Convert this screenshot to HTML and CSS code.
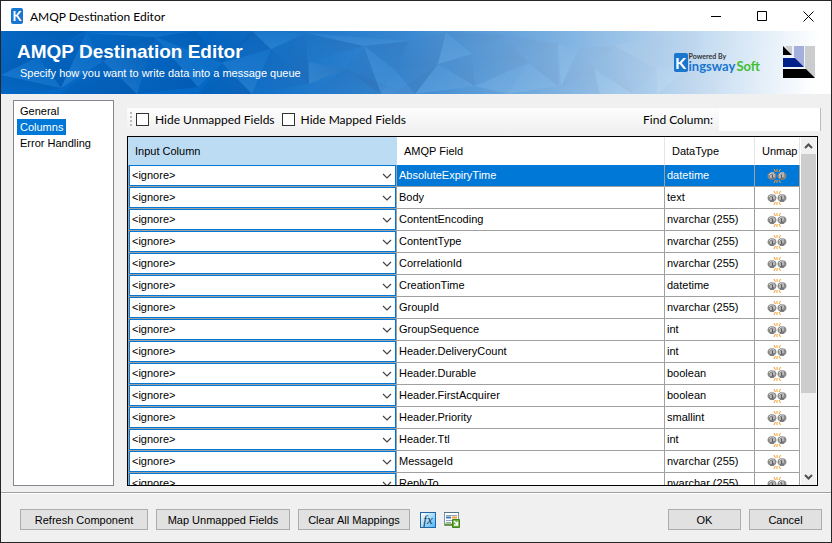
FILE: index.html
```
<!DOCTYPE html>
<html lang="en">
<head>
    <meta charset="utf-8">
    <title>AMQP Destination Editor</title>
    <link rel="stylesheet" href="styles.css">
</head>
<body>
    <svg class="symbols" aria-hidden="true">
        <symbol id="chevron" viewBox="0 0 10 6"><path d="M1 1l4 4 4-4" fill="none" stroke="#444" stroke-width="1.2"/></symbol>
        <symbol id="unlink" viewBox="0 0 20 16">
            <path d="M7 1l1.500 3M10 1v3M13.500 1l-1.500 3M7 15l1.500-3M10 15v-3M13.500 15l-1.500-3" stroke="#f0a030" fill="none"/>
            <ellipse cx="5" cy="8" rx="4.500" ry="4" fill="#8a8a8a"/>
            <ellipse cx="15" cy="8" rx="4.500" ry="4" fill="#8a8a8a"/>
            <path d="M2 7l2-2h3M12 7l2-2h3" stroke="#d5d5d5" fill="none"/>
            <path d="M4 7v3M7 6v3M13 7v3M16 6v3" stroke="#e0e0e0"/>
            <path d="M5.500 7v3M14.500 7v3" stroke="#5c5c5c"/>
            <path d="M3 11h4M13 11h4" stroke="#666"/>
        </symbol>
    </svg>

    <div class="window">
        <header class="titlebar">
            <span class="app-icon">K</span>
            <span class="title">AMQP Destination Editor</span>
            <button class="win-btn" aria-label="Minimize"><svg width="11" height="11"><path d="M0 5.500h10" stroke="#000"/></svg></button>
            <button class="win-btn" aria-label="Maximize"><svg width="11" height="11"><path d="M.5.5h9v9h-9z" fill="none" stroke="#000"/></svg></button>
            <button class="win-btn" aria-label="Close"><svg width="11" height="11"><path d="M.5.5l10 10M10.500.5l-10 10" stroke="#000"/></svg></button>
        </header>

        <section class="banner">
            <svg class="facets" viewBox="0 0 830 63" preserveAspectRatio="none" aria-hidden="true">
                <defs>
                    <linearGradient id="dark" x1="0" y1="0" x2="1" y2="1"><stop offset="0" stop-color="#00489a" stop-opacity="0"/><stop offset="1" stop-color="#00489a" stop-opacity=".4"/></linearGradient>
                    <linearGradient id="dark2" x1="1" y1="0" x2="0" y2="1"><stop offset="0" stop-color="#00489a" stop-opacity=".35"/><stop offset="1" stop-color="#00489a" stop-opacity="0"/></linearGradient>
                    <linearGradient id="light" x1="0" y1="1" x2="1" y2="0"><stop offset="0" stop-color="#4a9ae0" stop-opacity=".35"/><stop offset="1" stop-color="#4a9ae0" stop-opacity="0"/></linearGradient>
                </defs>
                <g fill="url(#dark)">
                    <path d="M0 0h22l15 26L0 44z"/><path d="M60 57L37 26 85 2z"/><path d="M85 2l69 4-52 24z"/><path d="M102 30l34 33H60z"/><path d="M154 6l43 50-61 7z"/><path d="M195 0h60l-34 32z"/><path d="M221 32l30 31h-54z"/><path d="M305 2l-35 16 38 35z"/><path d="M343 38l-35 15V31z"/><path d="M363 15l-20 23 37 25z"/><path d="M408 10l29 23-43 6z"/><path d="M445 1l-37 9 29 23z"/><path d="M437 33l-43 29 20 1z"/><path d="M474 55l-37-22 34-10z"/><path d="M505 4l-34 19 56 9z"/><path d="M557 13l-30 19 30 23z"/><path d="M578 17l15 21-33 17z"/><path d="M614 15l-21 23 39 25z"/><path d="M653 5l-39 10 42 23z"/><path d="M700 0l-47 5 38 29z"/><path d="M740 30l-49 4 22 29z"/>
                </g>
                <g fill="url(#dark2)">
                    <path d="M22 0h63L37 26z"/><path d="M0 44l60 13-30 6H0z"/><path d="M154 6l-18 57-34-33z"/><path d="M154 6l41-6 26 32z"/><path d="M251 0l19 18-49 14z"/><path d="M270 18l38 35-57 10z"/><path d="M305 2l58 13-55 16z"/><path d="M363 15l45-5-14 29z"/><path d="M343 38l65 25h-98z"/><path d="M394 39l43-6-23 30z"/><path d="M445 1l60 3-34 19z"/><path d="M471 23l56 9-53 23z"/><path d="M505 4l52 9-30 19z"/><path d="M557 55l36-17 6 25z"/><path d="M578 17l36-2-21 23z"/><path d="M614 15l42 23-24 25z"/><path d="M653 5l38 29-35 4z"/><path d="M691 34l22 29h-57z"/>
                </g>
                <g fill="url(#light)">
                    <path d="M37 26l23 31L0 44z"/><path d="M85 2l17 28-42 27z"/><path d="M102 30l52-24-18 57z"/><path d="M195 0l-41 6-69-4z"/><path d="M221 32l-24 24-43-50z"/><path d="M221 32l49-14-19 45z"/><path d="M251 0l54 2-35 16z"/><path d="M308 31l35 7-35 15z"/><path d="M363 15l31 24-14 24z"/><path d="M394 39l20 24h-34z"/><path d="M408 10l-45 5-58-13z"/><path d="M437 33l37 22-60 8z"/><path d="M445 1l26 22-34 10z"/><path d="M474 55l53-23-20 31z"/><path d="M527 32l30 23-50 8z"/><path d="M557 13l21 4-18 38z"/><path d="M593 38l39 25h-33z"/><path d="M614 15l39-10 3 33z"/><path d="M656 38l35-4-35 29z"/>
                </g>
            </svg>
            <div class="banner-text">
                <h1>AMQP Destination Editor</h1>
                <p>Specify how you want to write data into a message queue</p>
            </div>
            <div class="brand">
                <span class="brand-k">K</span>
                <div>
                    <div class="powered">Powered By</div>
                    <div class="brand-name">ingsway<span>Soft</span></div>
                </div>
            </div>
            <svg class="corner-logo" width="32" height="32" viewBox="0 0 32 32" aria-hidden="true">
                <path d="M0 0h32v32H0z" fill="#eef3fa"/>
                <path d="M2 0h7v9zM22 0h10v32l-10-10z" fill="#cbccce"/>
                <path d="M11 0h10v21L11 11z" fill="#a5afdd"/>
                <path d="M0 0l9 9H0z" fill="#000"/>
                <path d="M0 12h12l9 9H0z" fill="#00218a"/>
                <path d="M0 23h23l9 9H0z" fill="#000"/>
            </svg>
        </section>

        <main class="content">
            <nav class="pages">
                <a href="#general">General</a>
                <a href="#columns" class="active">Columns</a>
                <a href="#errors">Error Handling</a>
            </nav>
            <section class="editor">
                <div class="toolbar">
                    <span class="grip"></span>
                    <label><input type="checkbox"> Hide Unmapped Fields</label>
                    <label><input type="checkbox"> Hide Mapped Fields</label>
                    <label class="find">Find Column: <input type="text"></label>
                </div>
                <div class="grid">
                    <div class="grid-view">
                        <table>
                            <colgroup><col class="col-input"><col><col class="col-type"><col class="col-unmap"></colgroup>
                            <thead>
                                <tr><th class="sorted">Input Column</th><th>AMQP Field</th><th>DataType</th><th>Unmap</th></tr>
                            </thead>
                            <tbody id="rows"></tbody>
                        </table>
                    </div>
                    <div class="scrollbar">
                        <button aria-label="Scroll up"><svg width="9" height="6"><path d="M1 5l3.500-3.500L8 5" fill="none" stroke="#505050" stroke-width="2"/></svg></button>
                        <div class="track"><div class="thumb"></div></div>
                        <button aria-label="Scroll down"><svg width="9" height="6"><path d="M1 1l3.500 3.500L8 1" fill="none" stroke="#505050" stroke-width="2"/></svg></button>
                    </div>
                </div>
            </section>
        </main>

        <footer class="actions">
            <button class="btn refresh">Refresh Component</button>
            <button class="btn map">Map Unmapped Fields</button>
            <button class="btn clear">Clear All Mappings</button>
            <button class="icon-btn fx" aria-label="Expression"><i>fx</i></button>
            <button class="icon-btn" aria-label="Export mappings">
                <svg width="16" height="16" viewBox="0 0 16 16">
                    <path d="M.5.5h14v13H.5z" fill="#fff" stroke="#7c93a8"/>
                    <path d="M0 .5h15" stroke="#54748f"/>
                    <path d="M2 3.500h11M2 8.500h6M2 10.500h5" stroke="#8fa6bd"/>
                    <path d="M2 5.500h5" stroke="#3f78b8" stroke-width="2"/>
                    <path d="M8 5.500h5" stroke="#f0a030" stroke-width="2"/>
                    <path d="M1 12.500h7" stroke="#5d9c28" stroke-width="2"/>
                    <path d="M8.500 7.500h7v8h-7z" fill="#6cab3c" stroke="#3f8420"/>
                    <path d="M10 9l3.500 3.500M13.500 9.500v3.500h-3.500" fill="none" stroke="#fff" stroke-width="1.500"/>
                </svg>
            </button>
            <button class="btn ok">OK</button>
            <button class="btn cancel">Cancel</button>
        </footer>
    </div>
    <script src="script.js"></script>
</body>
</html>
```
FILE: styles.css
```
* {
    box-sizing: border-box;
}
body {
    margin: 0;
    font-family: "Liberation Sans", Arial, sans-serif;
    font-size: 11px;
    color: #000;
}
button, input, select {
    font: inherit;
    color: inherit;
    margin: 0;
}
.symbols {
    display: none;
}
.window {
    display: flex;
    flex-direction: column;
    height: 100vh;
    border: 1px solid #262626;
    background: #f0f0f0;
}

/* title bar */
.titlebar {
    display: flex;
    align-items: center;
    height: 30px;
    flex: none;
    padding-left: 10px;
    background: #fff;
    font-family: Lato, "Open Sans", sans-serif;
    font-size: 12px;
}
.app-icon {
    width: 12px;
    height: 16px;
    border-radius: 2px;
    background: #1976cf;
    color: #fff;
    font-size: 13px;
    font-weight: bold;
    line-height: 16px;
    text-align: center;
}
.title {
    margin-left: 7px;
    flex: 1;
}
.win-btn {
    display: flex;
    align-items: center;
    justify-content: center;
    width: 46px;
    height: 30px;
    padding: 0;
    border: none;
    background: none;
}

/* banner */
.banner {
    display: flex;
    position: relative;
    height: 63px;
    flex: none;
    padding: 0 16px;
    background: #0468c4;
    color: #fff;
}
.banner > * {
    position: relative;
}
.banner .facets {
    position: absolute;
    left: 0;
    top: 0;
    width: 100%;
    height: 100%;
}
.banner::before {
    content: "";
    position: absolute;
    inset: 0;
    z-index: 1;
    background: linear-gradient(95deg, rgba(255,255,255,0) 25%, rgba(255,255,255,.2) 48%, rgba(255,255,255,.45) 65%, rgba(255,255,255,.76) 84%, #fff 98%);
}
.banner-text, .brand, .corner-logo {
    z-index: 2;
}
.banner-text {
    flex: 1;
}
.banner h1 {
    margin: 10px 0 0;
    font-size: 19px;
    line-height: 22px;
}
.banner p {
    margin: 3px 0 0 3px;
    line-height: 14px;
}
.brand {
    display: flex;
    gap: 1px;
    margin: 22px 23px 0 0;
    height: 20px;
    font-family: Lato, "Open Sans", sans-serif;
    font-weight: bold;
}
.brand-k {
    width: 14px;
    height: 19px;
    border-radius: 2px;
    background: #1976cf;
    font-size: 16px;
    line-height: 19px;
    text-align: center;
}
.powered {
    color: #333;
    font-size: 7px;
    line-height: 7px;
}
.brand-name {
    color: #1976cf;
    font-size: 13px;
    line-height: 13px;
}
.brand-name span {
    margin-left: 1px;
    color: #3fbf2e;
}
.corner-logo {
    margin-top: 15px;
}

/* page list and grid */
.content {
    display: flex;
    flex: 1;
    min-height: 0;
    gap: 13px;
    padding: 6px 10px 6px 12px;
}
.pages {
    display: flex;
    flex-direction: column;
    align-items: flex-start;
    width: 101px;
    flex: none;
    padding: 2px 3px;
    border: 1px solid #828790;
    background: #fff;
}
.pages a {
    padding: 0 3px;
    line-height: 16px;
    color: #000;
    text-decoration: none;
}
.pages .active {
    background: #0078d7;
    color: #fff;
}
.editor {
    display: flex;
    flex: 1;
    flex-direction: column;
    min-width: 0;
}
.toolbar {
    display: flex;
    align-items: center;
    height: 24px;
    margin: 8px 0 4px;
    padding-bottom: 2px;
    gap: 7px;
    background: linear-gradient(#fdfdfd, #f0f0f0);
    font-family: Lato, "Open Sans", sans-serif;
    font-size: 12px;
}
.grip {
    width: 2px;
    height: 15px;
    margin: 0 -3px 0 3px;
    background: repeating-linear-gradient(#bbb 0 2px, transparent 2px 4px);
}
.toolbar label {
    display: flex;
    align-items: center;
    gap: 6px;
}
.toolbar input[type=checkbox] {
    appearance: none;
    width: 13px;
    height: 13px;
    border: 1px solid #333;
    background: #fff;
}
.toolbar .find {
    margin-left: auto;
}
.find input {
    width: 102px;
    height: 23px;
    border: none;
    border-right: 1px solid #bbb;
    background: #fff;
}
.grid {
    display: flex;
    flex: 1;
    min-height: 0;
    margin-right: 3px;
    border: 1px solid #000;
    background: #fff;
}
.grid-view {
    flex: 1;
    overflow: hidden;
}
table {
    width: 100%;
    table-layout: fixed;
    border-spacing: 0;
}
.col-input {
    width: 269px;
}
.col-type {
    width: 90px;
}
.col-unmap {
    width: 45px;
}
th {
    height: 28px;
    padding: 0 0 0 7px;
    border-right: 1px solid #e5e5e5;
    font-weight: normal;
    text-align: left;
}
th.sorted {
    background: #bcdcf4;
    border-color: #bcdcf4;
}
td {
    height: 22px;
    padding: 0 2px;
    border-right: 1px solid #a0a0a0;
    border-bottom: 1px solid #a0a0a0;
    line-height: 13px;
}
tr.selected td {
    background-color: #0078d7;
    color: #fff;
}
td:first-child, tr.selected td:first-child {
    padding: 0 0 0 1px;
    background: #a0a0a0;
    color: #000;
}
.combo {
    display: grid;
    align-items: center;
}
.combo select, .combo svg {
    grid-area: 1 / 1;
}
.combo select {
    appearance: none;
    width: 100%;
    height: 21px;
    padding: 0 2px;
    border: 1px solid #0078d7;
    border-radius: 0;
    background: #fff;
}
.combo svg {
    width: 10px;
    height: 6px;
    margin-right: 4px;
    justify-self: end;
    pointer-events: none;
}
.unmap {
    display: block;
    width: 20px;
    height: 16px;
    margin: 0 auto;
    padding: 0;
    border: none;
    background: none;
}
.unmap svg {
    display: block;
    width: 20px;
    height: 16px;
}
.scrollbar {
    display: flex;
    flex-direction: column;
    width: 17px;
    border: solid #fff;
    border-width: 0 1px;
    background: #f0f0f0;
}
.scrollbar button {
    display: flex;
    align-items: center;
    justify-content: center;
    height: 17px;
    padding: 0;
    border: none;
    background: none;
}
.track {
    flex: 1;
}
.thumb {
    height: 76%;
    background: #cdcdcd;
}

/* bottom buttons */
.actions {
    display: flex;
    align-items: center;
    height: 50px;
    flex: none;
    gap: 8px;
    padding: 4px 9px 0 19px;
    border-top: 1px solid #a0a0a0;
    box-shadow: inset 0 1px #fff;
}
.btn {
    width: 73px;
    height: 21px;
    padding: 0;
    border: 1px solid #adadad;
    background: #e1e1e1;
}
.refresh {
    width: 128px;
}
.map {
    width: 134px;
}
.clear {
    width: 112px;
    margin-right: 2px;
}
.icon-btn {
    width: 16px;
    height: 16px;
    padding: 0;
    border: none;
    background: none;
}
.icon-btn svg {
    display: block;
}
.fx {
    border: 1px solid #2465a5;
    background: linear-gradient(135deg, #fff, #4cb8f5);
    color: #143a5c;
    font-family: "Liberation Serif", serif;
    font-size: 13px;
    line-height: 12px;
}
.ok {
    margin-left: auto;
}
```
FILE: script.js
```
const fields = [
    ["AbsoluteExpiryTime", "datetime"],
    ["Body", "text"],
    ["ContentEncoding", "nvarchar (255)"],
    ["ContentType", "nvarchar (255)"],
    ["CorrelationId", "nvarchar (255)"],
    ["CreationTime", "datetime"],
    ["GroupId", "nvarchar (255)"],
    ["GroupSequence", "int"],
    ["Header.DeliveryCount", "int"],
    ["Header.Durable", "boolean"],
    ["Header.FirstAcquirer", "boolean"],
    ["Header.Priority", "smallint"],
    ["Header.Ttl", "int"],
    ["MessageId", "nvarchar (255)"],
    ["ReplyTo", "nvarchar (255)"]
];

document.getElementById("rows").innerHTML = fields.map(([name, type], i) => `
    <tr class="${i === 0 ? "selected" : ""}">
        <td><div class="combo"><select aria-label="Input column for ${name}"><option>&lt;ignore&gt;</option></select><svg><use href="#chevron"/></svg></div></td>
        <td>${name}</td>
        <td>${type}</td>
        <td><button class="unmap" aria-label="Unmap ${name}"><svg><use href="#unlink"/></svg></button></td>
    </tr>`).join("");
```
